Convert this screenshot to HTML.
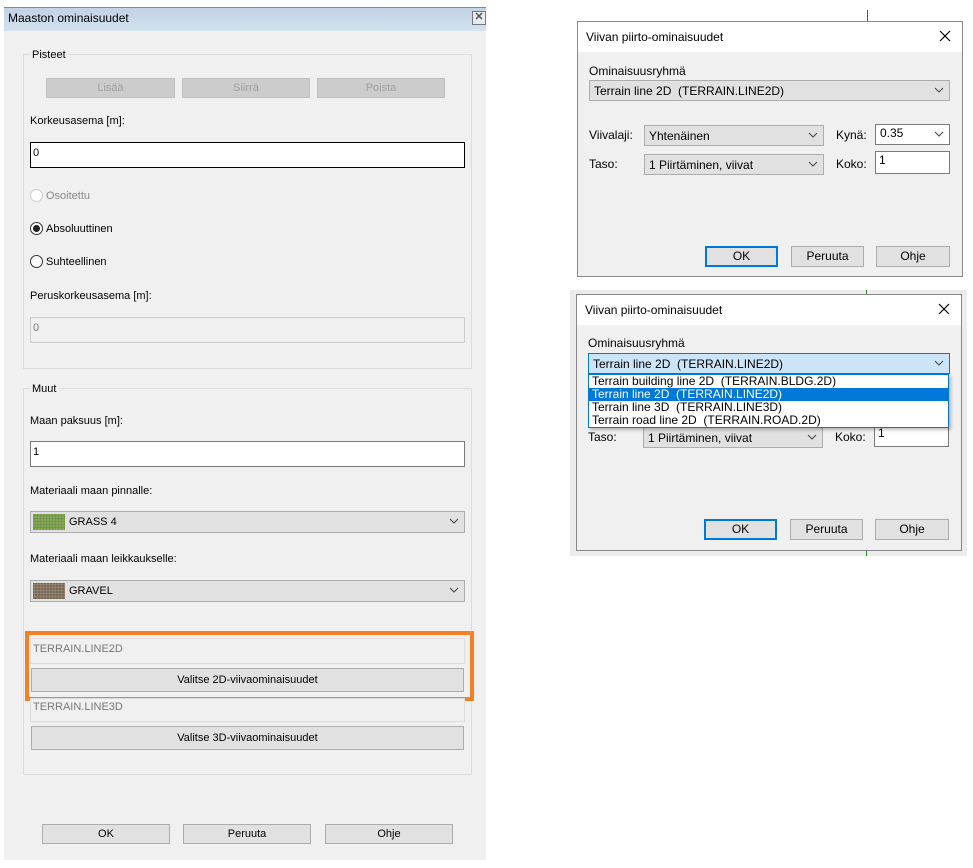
<!DOCTYPE html>
<html><head><meta charset="utf-8"><style>
*{box-sizing:border-box;margin:0;padding:0}
body{width:973px;height:868px;background:#fff;position:relative;overflow:hidden;font-family:"Liberation Sans",Arial,sans-serif;font-size:11px;color:#000}
.a{position:absolute}
.btn{position:absolute;background:#e1e1e1;border:1px solid #adadad;text-align:center;font-size:11px}
.dis{background:#cccccc;border-color:#bfbfbf;color:#a0a0a0}
.inp{position:absolute;background:#fff;border:1px solid #7a7a7a;padding:4px 2px;font-size:11px}
.cb{position:absolute;background:#e1e1e1;border:1px solid #adadad;font-size:12px;padding:3px 4px}
.chev{position:absolute;right:5px;top:5px;width:10px;height:8px}
.grp{position:absolute;border:1px solid #dcdcdc}
.gl{position:absolute;background:#f0f0f0;padding:0 2px}
.rad{position:absolute;width:13px;height:13px;border:1px solid #333;border-radius:50%;background:#fff}
.r{font-size:12px}
</style></head><body>
<!-- Left dialog -->
<div class="a" style="left:4px;top:7px;width:482px;height:853px;background:#f0f0f0"></div>
<div class="a" style="left:4px;top:7px;width:482px;height:24px;background:linear-gradient(#c2d3e5,#d4e1ef);border-top:1px solid #888"></div>
<div class="a" style="left:8px;top:11px;font-size:12px">Maaston ominaisuudet</div>
<div class="a" style="left:472px;top:11px;width:14px;height:14px;border:1px solid #777;background:#e6ecf3;font-size:11px;line-height:11px;text-align:center;color:#555;font-weight:bold">✕</div>

<div class="grp" style="left:23px;top:54px;width:449px;height:315px"></div>
<div class="gl" style="left:30px;top:49px">Pisteet</div>
<div class="btn dis" style="left:46px;top:78px;width:129px;height:20px;line-height:19px">Lisää</div>
<div class="btn dis" style="left:182px;top:78px;width:128px;height:20px;line-height:19px">Siirrä</div>
<div class="btn dis" style="left:317px;top:78px;width:128px;height:20px;line-height:19px">Poista</div>
<div class="a" style="left:30px;top:115px">Korkeusasema [m]:</div>
<div class="inp" style="left:30px;top:142px;width:435px;height:26px;border-color:#000">0</div>
<div class="rad" style="left:30px;top:189px;border-color:#ccc"></div>
<div class="a" style="left:46px;top:190px;color:#888">Osoitettu</div>
<div class="rad" style="left:30px;top:222px"></div><div class="a" style="left:33px;top:225px;width:7px;height:7px;border-radius:50%;background:#222"></div>
<div class="a" style="left:46px;top:223px">Absoluuttinen</div>
<div class="rad" style="left:30px;top:255px"></div>
<div class="a" style="left:46px;top:256px">Suhteellinen</div>
<div class="a" style="left:30px;top:290px">Peruskorkeusasema [m]:</div>
<div class="inp" style="left:30px;top:317px;width:435px;height:26px;background:#f0f0f0;border-color:#ccc;color:#777">0</div>

<div class="grp" style="left:23px;top:388px;width:449px;height:387px"></div>
<div class="gl" style="left:30px;top:383px">Muut</div>
<div class="a" style="left:30px;top:415px">Maan paksuus [m]:</div>
<div class="inp" style="left:30px;top:441px;width:435px;height:26px">1</div>
<div class="a" style="left:30px;top:485px">Materiaali maan pinnalle:</div>
<div class="cb" style="left:30px;top:511px;width:435px;height:22px;font-size:11px;padding:0"><div class="a" style="left:2px;top:2px;width:32px;height:16px;background:#8fae63;background-image:radial-gradient(#6d9146 1px,transparent 1.5px);background-size:3px 3px"></div><span class="a" style="left:38px;top:4px">GRASS 4</span><svg class="chev" viewBox="0 0 10 8"><path d="M1 2l4 4 4-4" stroke="#444" fill="none"/></svg></div>
<div class="a" style="left:30px;top:553px">Materiaali maan leikkaukselle:</div>
<div class="cb" style="left:30px;top:580px;width:435px;height:22px;font-size:11px;padding:0"><div class="a" style="left:2px;top:2px;width:32px;height:16px;background:#6b5b4e;background-image:radial-gradient(#9a8a74 1px,transparent 1.5px);background-size:3px 3px"></div><span class="a" style="left:38px;top:4px">GRAVEL</span><svg class="chev" viewBox="0 0 10 8"><path d="M1 2l4 4 4-4" stroke="#444" fill="none"/></svg></div>

<div class="inp" style="left:30px;top:638px;width:435px;height:26px;background:#f0f0f0;border-color:#dcdcdc;color:#777">TERRAIN.LINE2D</div>
<div class="btn" style="left:31px;top:668px;width:433px;height:24px;line-height:23px">Valitse 2D-viivaominaisuudet</div>
<div class="a" style="left:25px;top:631px;width:449px;height:70px;border:4px solid #f58025"></div>
<div class="inp" style="left:30px;top:698px;width:435px;height:24px;background:#f0f0f0;border-color:#dcdcdc;color:#777;padding-top:2px">TERRAIN.LINE3D</div>
<div class="btn" style="left:31px;top:726px;width:433px;height:24px;line-height:23px">Valitse 3D-viivaominaisuudet</div>

<div class="btn" style="left:42px;top:824px;width:128px;height:20px;line-height:19px">OK</div>
<div class="btn" style="left:183px;top:824px;width:128px;height:20px;line-height:19px">Peruuta</div>
<div class="btn" style="left:325px;top:824px;width:128px;height:20px;line-height:19px">Ohje</div>

<!-- Top right dialog -->
<div class="a" style="left:867px;top:10px;width:1px;height:11px;background:#555"></div>
<div class="a r" style="left:577px;top:21px;width:386px;height:256px;background:#f0f0f0;border:1px solid #888"></div>
<div class="a" style="left:578px;top:22px;width:384px;height:30px;background:#fff"></div>
<div class="a r" style="left:586px;top:30px">Viivan piirto-ominaisuudet</div>
<svg class="a" style="left:939px;top:30px" width="12" height="12"><path d="M1 1l10 10M11 1L1 11" stroke="#000" stroke-width="1.2"/></svg>
<div class="a r" style="left:589px;top:64px">Ominaisuusryhmä</div>
<div class="cb" style="left:589px;top:80px;width:361px;height:21px">Terrain line 2D&nbsp; (TERRAIN.LINE2D)<svg class="chev" viewBox="0 0 10 8"><path d="M1 2l4 4 4-4" stroke="#444" fill="none"/></svg></div>
<div class="a r" style="left:589px;top:128px">Viivalaji:</div>
<div class="cb" style="left:644px;top:125px;width:180px;height:21px">Yhtenäinen<svg class="chev" viewBox="0 0 10 8"><path d="M1 2l4 4 4-4" stroke="#444" fill="none"/></svg></div>
<div class="a r" style="left:836px;top:128px">Kynä:</div>
<div class="cb" style="left:875px;top:124px;width:75px;height:21px;background:#fff;border-color:#7a7a7a;padding-top:1px">0.35<svg class="chev" viewBox="0 0 10 8"><path d="M1 2l4 4 4-4" stroke="#444" fill="none"/></svg></div>
<div class="a r" style="left:589px;top:157px">Taso:</div>
<div class="cb" style="left:644px;top:154px;width:180px;height:21px">1 Piirtäminen, viivat<svg class="chev" viewBox="0 0 10 8"><path d="M1 2l4 4 4-4" stroke="#444" fill="none"/></svg></div>
<div class="a r" style="left:836px;top:157px">Koko:</div>
<div class="inp r" style="left:875px;top:151px;width:75px;height:23px;padding:1px 3px">1</div>
<div class="btn r" style="left:705px;top:246px;width:73px;height:21px;line-height:17px;border:2px solid #0078d7">OK</div>
<div class="btn r" style="left:791px;top:246px;width:73px;height:21px;line-height:19px">Peruuta</div>
<div class="btn r" style="left:876px;top:246px;width:74px;height:21px;line-height:19px">Ohje</div>

<!-- Bottom right dialog -->
<div class="a" style="left:570px;top:290px;width:397px;height:266px;background:#ececec"></div>
<div class="a" style="left:866px;top:290px;width:1px;height:266px;background:#1a8a1a"></div>
<div class="a r" style="left:576px;top:294px;width:386px;height:257px;background:#f0f0f0;border:1px solid #888"></div>
<div class="a" style="left:577px;top:295px;width:384px;height:30px;background:#fff"></div>
<div class="a r" style="left:585px;top:303px">Viivan piirto-ominaisuudet</div>
<svg class="a" style="left:938px;top:303px" width="12" height="12"><path d="M1 1l10 10M11 1L1 11" stroke="#000" stroke-width="1.2"/></svg>
<div class="a r" style="left:588px;top:336px">Ominaisuusryhmä</div>
<div class="cb" style="left:588px;top:353px;width:362px;height:21px;background:#cce4f7;border-color:#0078d7">Terrain line 2D&nbsp; (TERRAIN.LINE2D)<svg class="chev" viewBox="0 0 10 8"><path d="M1 2l4 4 4-4" stroke="#444" fill="none"/></svg></div>
<div class="a r" style="left:588px;top:430px">Taso:</div>
<div class="cb" style="left:643px;top:427px;width:180px;height:21px">1 Piirtäminen, viivat<svg class="chev" viewBox="0 0 10 8"><path d="M1 2l4 4 4-4" stroke="#444" fill="none"/></svg></div>
<div class="a r" style="left:835px;top:430px">Koko:</div>
<div class="inp r" style="left:874px;top:424px;width:75px;height:23px;padding:1px 3px">1</div>
<div class="a r" style="left:588px;top:374px;width:361px;height:54px;background:#fff;border:1px solid #0078d7;box-shadow:2px 2px 3px rgba(0,0,0,.25);line-height:13px">
<div style="padding-left:3px;height:13px">Terrain building line 2D&nbsp; (TERRAIN.BLDG.2D)</div>
<div style="padding-left:3px;height:13px;background:#0078d7;color:#fff">Terrain line 2D&nbsp; (TERRAIN.LINE2D)</div>
<div style="padding-left:3px;height:13px">Terrain line 3D&nbsp; (TERRAIN.LINE3D)</div>
<div style="padding-left:3px;height:13px">Terrain road line 2D&nbsp; (TERRAIN.ROAD.2D)</div>
</div>
<div class="btn r" style="left:704px;top:519px;width:73px;height:21px;line-height:17px;border:2px solid #0078d7">OK</div>
<div class="btn r" style="left:790px;top:519px;width:73px;height:21px;line-height:19px">Peruuta</div>
<div class="btn r" style="left:875px;top:519px;width:74px;height:21px;line-height:19px">Ohje</div>
</body></html>
